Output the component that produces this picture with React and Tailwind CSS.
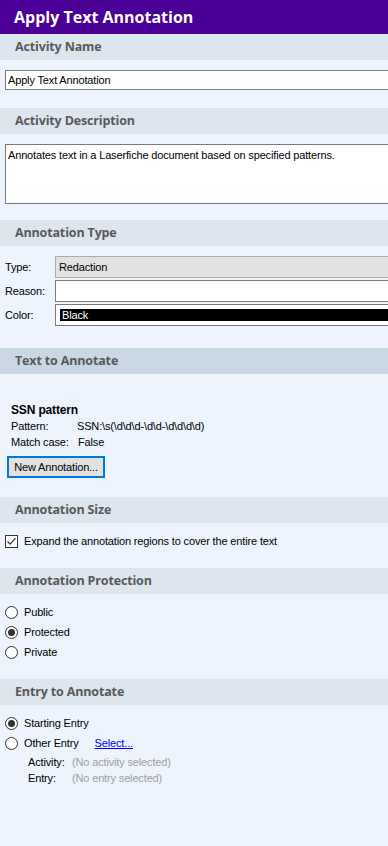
const body = { fontFamily: '"Liberation Sans", Arial, sans-serif', letterSpacing: "-0.15px" };
const head = { fontFamily: '"Open Sans", "Noto Sans", sans-serif' };

function SectionHeader({ title, dark }) {
  return (
    <div
      className={`h-[26px] flex items-center pl-[15px] text-[12.5px] font-bold text-[#595959] ${dark ? "bg-[#c9d7e4]" : "bg-[#dde5ee]"}`}
      style={head}
    >
      {title}
    </div>
  );
}

function Radio({ checked, label, children }) {
  return (
    <div className="flex items-center h-[20px] pl-[5px]">
      <span className="w-[13px] h-[13px] rounded-full border border-[#333] bg-white flex items-center justify-center">
        {checked && <span className="w-[7px] h-[7px] rounded-full bg-[#333]" />}
      </span>
      <span className="ml-[6px]">{label}</span>
      {children}
    </div>
  );
}

export default function App() {
  return (
    <div className="w-[388px] h-[846px] overflow-hidden bg-[#edf4fd] text-[11px] text-black" style={body}>
      {/* Title */}
      <div className="h-[34px] bg-[#4a0096] flex items-center pl-[14px]">
        <h1 className="text-white text-[16px] font-bold tracking-normal" style={head}>Apply Text Annotation</h1>
      </div>

      {/* Activity Name */}
      <SectionHeader title="Activity Name" />
      <div className="h-[48px] pt-[10px] pl-[5px]">
        <div className="h-[20px] w-[400px] bg-white border border-[#7a7a7a] flex items-center pl-[2px]">
          Apply Text Annotation
        </div>
      </div>

      {/* Activity Description */}
      <SectionHeader title="Activity Description" />
      <div className="h-[86px] pt-[10px] pl-[5px]">
        <div className="h-[60px] w-[400px] bg-white border border-[#7a7a7a] pl-[2px] pt-[2px]">
          Annotates text in a Laserfiche document based on specified patterns.
        </div>
      </div>

      {/* Annotation Type */}
      <SectionHeader title="Annotation Type" />
      <div className="h-[102px] pt-[10px] flex flex-col gap-[2px]">
        <div className="flex items-center h-[22px]">
          <span className="w-[55px] pl-[5px]">Type:</span>
          <div className="flex-1 h-[22px] bg-[#e1e1e1] border border-[#adadad] flex items-center pl-[3px] mr-[-10px]">Redaction</div>
        </div>
        <div className="flex items-center h-[22px]">
          <span className="w-[55px] pl-[5px]">Reason:</span>
          <div className="flex-1 h-[22px] bg-white border border-[#7a7a7a] mr-[-10px]" />
        </div>
        <div className="flex items-center h-[22px]">
          <span className="w-[55px] pl-[5px]">Color:</span>
          <div className="flex-1 h-[22px] bg-white border border-[#7a7a7a] flex items-center pl-[4px] mr-[-10px]">
            <div className="h-[12px] w-full bg-black text-white flex items-center pl-[2px] leading-none">Black</div>
          </div>
        </div>
      </div>

      {/* Text to Annotate */}
      <SectionHeader title="Text to Annotate" dark />
      <div className="h-[123px] pt-[28px] pl-[11px]">
        <div className="font-bold text-[12px] leading-[16px]">SSN pattern</div>
        <div className="flex leading-[16px]">
          <span className="w-[66px]">Pattern:</span>
          <span>SSN:\s(\d\d\d-\d\d-\d\d\d\d)</span>
        </div>
        <div className="flex leading-[16px]">
          <span className="w-[67px]">Match case:</span>
          <span>False</span>
        </div>
        <button className="mt-[6px] ml-[-4px] h-[22px] w-[98px] bg-[#e1e1e1] border-2 border-[#0078d7] text-[11px]" style={body}>
          New Annotation...
        </button>
      </div>

      {/* Annotation Size */}
      <SectionHeader title="Annotation Size" />
      <div className="h-[45px] pt-[10px] pl-[5px]">
        <div className="flex items-center h-[16px]">
          <span className="w-[13px] h-[13px] border border-[#333] bg-white flex items-center justify-center">
            <svg width="11" height="11" viewBox="0 0 11 11">
              <path d="M1.5 5.5 L4.2 8.2 L9.5 2.2" fill="none" stroke="#333" strokeWidth="1.2" />
            </svg>
          </span>
          <span className="ml-[6px]">Expand the annotation regions to cover the entire text</span>
        </div>
      </div>

      {/* Annotation Protection */}
      <SectionHeader title="Annotation Protection" />
      <div className="h-[85px] pt-[8px]">
        <Radio label="Public" />
        <Radio checked label="Protected" />
        <Radio label="Private" />
      </div>

      {/* Entry to Annotate */}
      <SectionHeader title="Entry to Annotate" />
      <div className="pt-[8px]">
        <Radio checked label="Starting Entry" />
        <Radio label="Other Entry">
          <a className="ml-[16px] text-[#0000ff] underline cursor-pointer">Select...</a>
        </Radio>
        <div className="pl-[28px] leading-[16px] mt-[1px]">
          <div className="flex">
            <span className="w-[44px]">Activity:</span>
            <span className="text-[#a0a0a0]">(No activity selected)</span>
          </div>
          <div className="flex">
            <span className="w-[44px]">Entry:</span>
            <span className="text-[#a0a0a0]">(No entry selected)</span>
          </div>
        </div>
      </div>
    </div>
  );
}
